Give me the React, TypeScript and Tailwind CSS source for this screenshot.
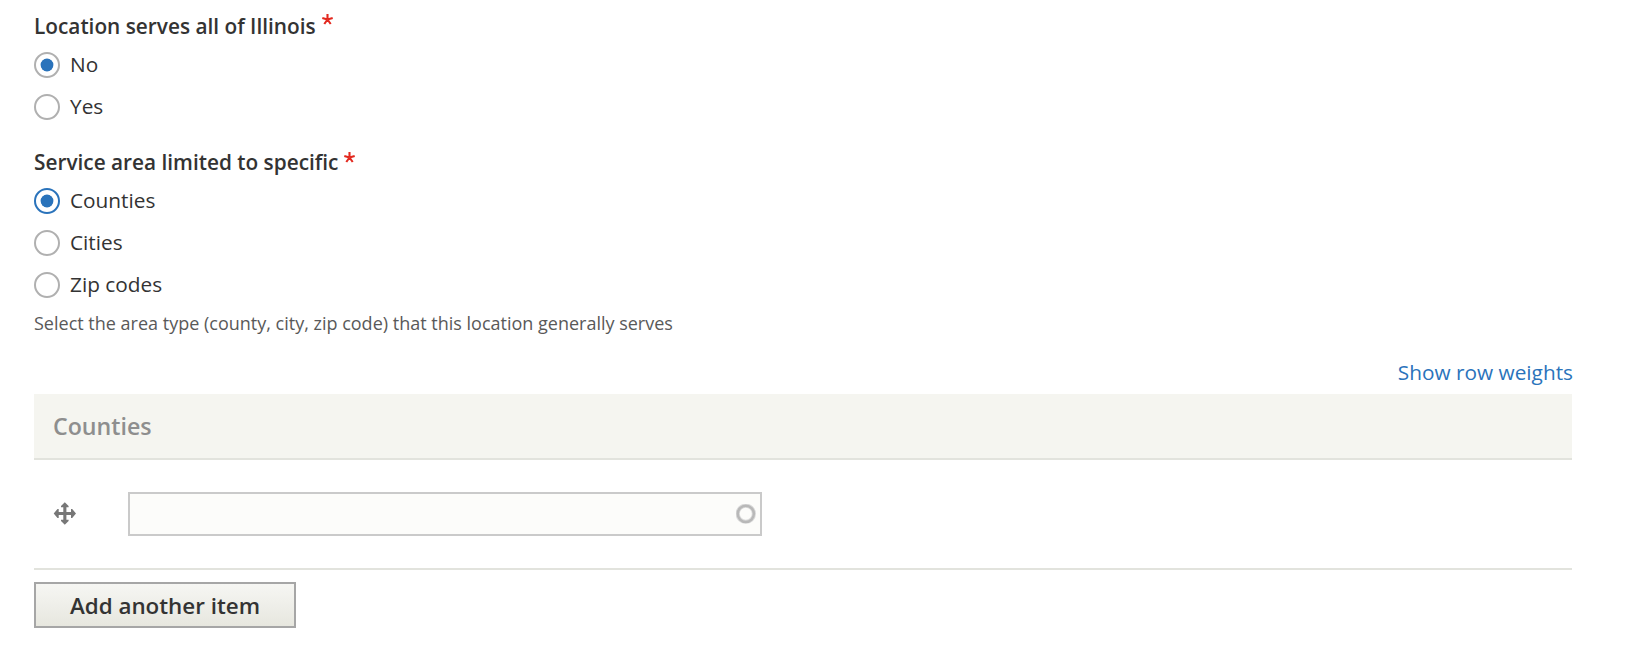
import { useState } from "react";

type RadioProps = {
  label: string;
  checked: boolean;
  focused?: boolean;
  onSelect: () => void;
};

function Radio({ label, checked, focused = false, onSelect }: RadioProps) {
  return (
    <button type="button" role="radio" aria-checked={checked} onClick={onSelect} className="flex h-[42px] items-center gap-[10px]">
      <span
        className={`flex size-[26px] items-center justify-center rounded-full border-2 bg-white ${
          focused ? "border-[#2a73bb]" : "border-[#b0b0b0]"
        }`}
      >
        {checked && <span className="size-3 rounded-full bg-[#2a73bb] shadow-[0_0_0_0.4px_#2a73bb]" />}
      </span>
      <span className="pb-[2px] text-[20.8px] leading-[30px]">{label}</span>
    </button>
  );
}

function Legend({ text, markClass }: { text: string; markClass: string }) {
  return (
    <div className="flex h-9 items-center pt-[2px] text-[20.8px] font-semibold">
      <span>{text}</span>
      <svg className={`ml-[6px] h-[11px] w-[11px] ${markClass}`} viewBox="0 0 11 11" fill="none" stroke="#e3291f" strokeWidth="2.1">
        <path d="M5.5 0V5.5M5.5 5.5L0.3 4M5.5 5.5L10.7 4M5.5 5.5L2.3 10M5.5 5.5L8.7 10" />
      </svg>
    </div>
  );
}

const areas = ["Counties", "Cities", "Zip codes"];

export default function App() {
  const [all, setAll] = useState("No");
  const [area, setArea] = useState("Counties");

  return (
    <main className="h-[648px] bg-white pt-2 pr-[68px] pl-[34px] font-['Open_Sans',sans-serif] text-[#333]">
      <section>
        <Legend text="Location serves all of Illinois" markClass="mb-[15px]" />
        {["No", "Yes"].map((o) => (
          <Radio key={o} label={o} checked={all === o} onSelect={() => setAll(o)} />
        ))}
      </section>

      <section className="mt-4">
        <Legend text="Service area limited to specific" markClass="mb-[12px]" />
        {areas.map((o) => (
          <Radio key={o} label={o} checked={area === o} focused={area === o} onSelect={() => setArea(o)} />
        ))}
        <p className="h-[34px] text-[18px] leading-[34px] text-[#595959]">
          Select the area type (county, city, zip code) that this location generally serves
        </p>
      </section>

      <div className="mt-[10px] -mr-px flex h-11 items-center justify-end pt-[2px] text-[20.8px] text-[#2a73bb]">
        <button type="button">Show row weights</button>
      </div>

      <div className="flex h-[66px] items-center border-b-2 border-[#e2e3dd] bg-[#f5f5f0] pl-[19px] text-[23.2px] font-semibold text-[#8e8e8e]">
        <span>Counties</span>
      </div>
      <div className="flex h-[110px] items-center border-b-2 border-[#e2e3dd] pl-[19px]">
        <svg className="mb-[2px] size-[23px]" viewBox="0 0 23 23" fill="#777">
          <path d="M11.8 0.3L15.6 4V5.2H13.4V10H18V7H19.2L23 11.5L19.2 16H18V13H13.4V17.8H15.6V19L11.8 22.7L8 19V17.8H10.3V13H5.7V16H4.5L0.7 11.5L4.5 7H5.7V10H10.3V5.2H8V4Z" />
        </svg>
        <div className="ml-[52px] flex h-11 w-[634px] items-center border-2 border-[#cacaca] bg-[#fcfcfa] pr-1">
          <input aria-label="County" className="h-full min-w-0 flex-1 bg-transparent px-2 text-[21px] outline-none" />
          <svg className="size-5" viewBox="0 0 20 20" fill="none">
            <circle cx="9.8" cy="9.8" r="8.1" stroke="#dadada" strokeWidth="4.2" />
            <circle cx="9.8" cy="9.8" r="8.1" stroke="#b8b8b8" strokeWidth="2.4" />
          </svg>
        </div>
      </div>

      <button
        type="button"
        className="mt-3 flex h-[46px] w-[262px] items-center justify-center border-2 border-[#a6a6a6] bg-linear-to-b from-[#f6f6f3] to-[#e7e7df] pt-[2px] text-[22.4px] font-semibold"
      >
        Add another item
      </button>
    </main>
  );
}
